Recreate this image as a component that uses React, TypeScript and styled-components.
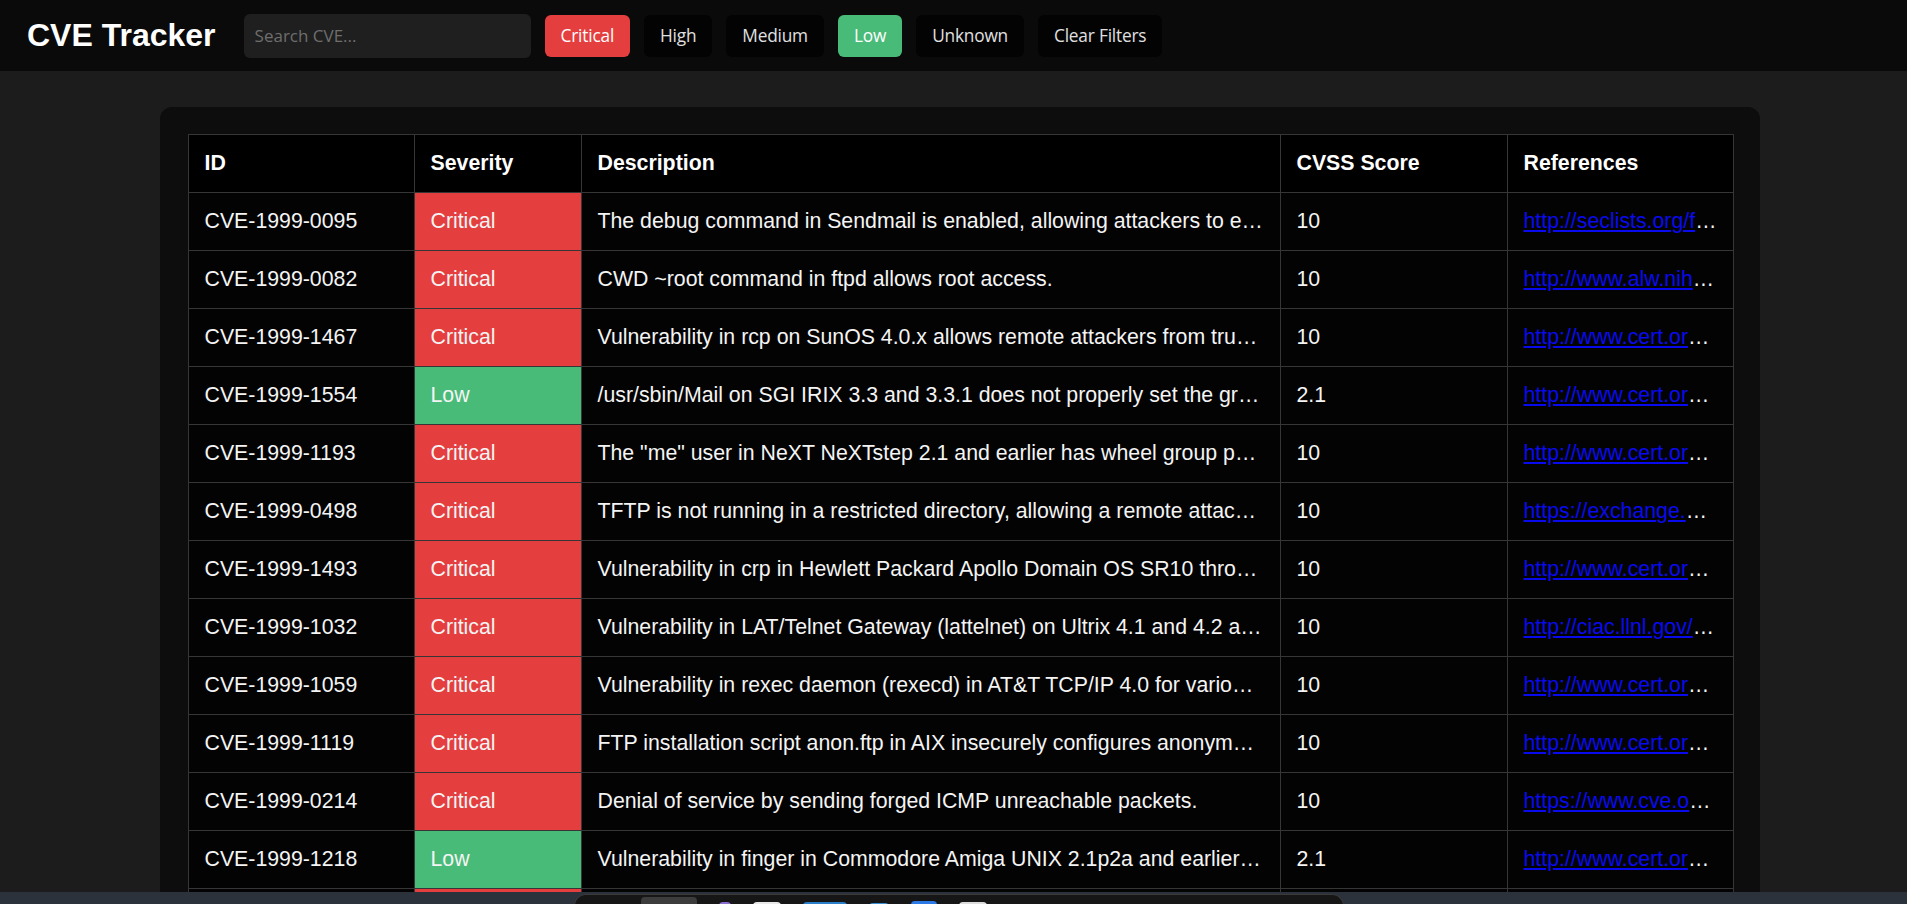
import React, { useState } from 'react'
import styled, { createGlobalStyle } from 'styled-components'

const GlobalStyle = createGlobalStyle`
  html, body {
    margin: 0;
    padding: 0;
    background: #1c1c1c;
    overflow: hidden;
    scrollbar-width: none;
  }
  body {
    font-family: "Liberation Sans", Arial, sans-serif;
    color: #f2f2f2;
  }
`

const Header = styled.header`
  display: flex;
  align-items: center;
  height: 71px;
  padding: 0 27px;
  background: #0a0a0a;
`

const Title = styled.h1`
  margin: 0 28px 0 0;
  font-size: 32px;
  font-weight: 700;
  color: #fff;
  white-space: nowrap;
`

const Search = styled.input`
  width: 287px;
  height: 44px;
  box-sizing: border-box;
  padding: 0 11px;
  border: none;
  border-radius: 6px;
  background: #1f1f1f;
  color: #ddd;
  font-family: "Open Sans", sans-serif;
  font-size: 17px;
  outline: none;
  &::placeholder {
    color: #6e6e6e;
  }
`

const FilterButton = styled.button<{ $active?: string }>`
  height: 42px;
  margin-left: 14px;
  padding: 0 16px;
  border: none;
  border-radius: 6px;
  background: ${p => p.$active || '#030303'};
  color: ${p => (p.$active ? '#fff' : '#e0e0e0')};
  font-family: "Open Sans", sans-serif;
  font-size: 17.3px;
  letter-spacing: -0.2px;
  cursor: pointer;
  white-space: nowrap;
`

const Panel = styled.main`
  width: 1600px;
  box-sizing: border-box;
  margin: 36px 0 0 160px;
  padding: 27px 27px 27px 27.5px;
  background: #0d0d0d;
  border-radius: 12px;
`

const Table = styled.table`
  width: 1545px;
  table-layout: fixed;
  border-collapse: collapse;
  background: #030303;
  font-size: 21.3px;
`

const Th = styled.th`
  padding: 16px;
  line-height: 25px;
  text-align: left;
  font-weight: 700;
  color: #fff;
  background: #000;
  border: 1px solid #363636;
`

const Td = styled.td<{ $bg?: string }>`
  padding: 16px;
  line-height: 25px;
  color: #f4f4f4;
  background: ${p => p.$bg || 'transparent'};
  border: 1px solid #363636;
  white-space: nowrap;
  overflow: hidden;
  text-overflow: ellipsis;
`

const RefLink = styled.a`
  color: #0a0aee;
  text-decoration: underline;
`

const OsBar = styled.div`
  position: fixed;
  left: 0;
  right: 0;
  bottom: 0;
  height: 12px;
  background: #2c323c;
`

const Dock = styled.div`
  position: absolute;
  left: 574px;
  top: 2px;
  width: 770px;
  height: 12px;
  display: flex;
  align-items: flex-start;
  gap: 22px;
  padding-left: 66px;
  box-sizing: border-box;
  background: #161616;
  border: 1px solid #3a3a3a;
  border-bottom: none;
  border-radius: 12px 12px 0 0;
`

const DockIcon = styled.span<{ $c: string; $w?: number; $mt?: number }>`
  display: block;
  width: ${p => p.$w || 24}px;
  height: 10px;
  margin-top: ${p => p.$mt ?? 7}px;
  border-radius: 4px 4px 0 0;
  background: ${p => p.$c};
`

const severityColors: Record<string, string> = {
  Critical: '#e53e3e',
  High: '#dd6b20',
  Medium: '#d69e2e',
  Low: '#48bb78',
  Unknown: '#718096',
}

type Cve = { id: string; severity: string; description: string; score: string; ref: string }

const cves: Cve[] = [
  { id: 'CVE-1999-0095', severity: 'Critical', description: 'The debug command in Sendmail is enabled, allowing attackers to execute commands as root.', score: '10', ref: 'http://seclists.org/fulldisclosure/2019/Jun/16' },
  { id: 'CVE-1999-0082', severity: 'Critical', description: 'CWD ~root command in ftpd allows root access.', score: '10', ref: 'http://www.alw.nih.gov/Security/Docs/admin-guide-to-cracking.101.html' },
  { id: 'CVE-1999-1467', severity: 'Critical', description: 'Vulnerability in rcp on SunOS 4.0.x allows remote attackers from trusted hosts to execute arbitrary commands as root.', score: '10', ref: 'http://www.cert.org/advisories/CA-1989-07.html' },
  { id: 'CVE-1999-1554', severity: 'Low', description: '/usr/sbin/Mail on SGI IRIX 3.3 and 3.3.1 does not properly set the group ID to the group ID of the user who started Mail.', score: '2.1', ref: 'http://www.cert.org/advisories/CA-1990-08.html' },
  { id: 'CVE-1999-1193', severity: 'Critical', description: 'The "me" user in NeXT NeXTstep 2.1 and earlier has wheel group permissions, which could allow the me user to become root.', score: '10', ref: 'http://www.cert.org/advisories/CA-1991-06.html' },
  { id: 'CVE-1999-0498', severity: 'Critical', description: 'TFTP is not running in a restricted directory, allowing a remote attacker to access sensitive information.', score: '10', ref: 'https://exchange.xforce.ibmcloud.com/vulnerabilities/CVE-1999-0498' },
  { id: 'CVE-1999-1493', severity: 'Critical', description: 'Vulnerability in crp in Hewlett Packard Apollo Domain OS SR10 through SR10.3 allows local users to gain root privileges.', score: '10', ref: 'http://www.cert.org/advisories/CA-1992-08.html' },
  { id: 'CVE-1999-1032', severity: 'Critical', description: 'Vulnerability in LAT/Telnet Gateway (lattelnet) on Ultrix 4.1 and 4.2 allows attackers to gain root privileges.', score: '10', ref: 'http://ciac.llnl.gov/ciac/bulletins/b-41.shtml' },
  { id: 'CVE-1999-1059', severity: 'Critical', description: 'Vulnerability in rexec daemon (rexecd) in AT&T TCP/IP 4.0 for various SVR4 systems allows remote attackers to execute commands.', score: '10', ref: 'http://www.cert.org/advisories/CA-1992-07.html' },
  { id: 'CVE-1999-1119', severity: 'Critical', description: 'FTP installation script anon.ftp in AIX insecurely configures anonymous FTP, which allows remote attackers to execute commands.', score: '10', ref: 'http://www.cert.org/advisories/CA-1992-09.html' },
  { id: 'CVE-1999-0214', severity: 'Critical', description: 'Denial of service by sending forged ICMP unreachable packets.', score: '10', ref: 'https://www.cve.org/CVERecord?id=CVE-1999-0214' },
  { id: 'CVE-1999-1218', severity: 'Low', description: 'Vulnerability in finger in Commodore Amiga UNIX 2.1p2a and earlier allows local users to read arbitrary files.', score: '2.1', ref: 'http://www.cert.org/advisories/CA-1993-02.html' },
  { id: 'CVE-1999-1197', severity: 'Critical', description: 'TIOCCONS in SunOS 4.1.1 does not properly check the permissions of a user who tries to redirect console output.', score: '10', ref: 'http://www.cert.org/advisories/CA-1990-12.html' },
  { id: 'CVE-1999-1391', severity: 'Critical', description: 'Vulnerability in NeXT 1.0a and 1.0 with publicly accessible printers allows local users to gain privileges.', score: '10', ref: 'http://www.cert.org/advisories/CA-1990-06.html' },
]

const filters = ['Critical', 'High', 'Medium', 'Low', 'Unknown']

export default function App() {
  const [active, setActive] = useState<string[]>(['Critical', 'Low'])
  const [query, setQuery] = useState('')

  const toggle = (f: string) =>
    setActive(a => (a.includes(f) ? a.filter(x => x !== f) : [...a, f]))

  const rows = cves.filter(
    c =>
      (active.length === 0 || active.includes(c.severity)) &&
      c.id.toLowerCase().includes(query.toLowerCase())
  )

  return (
    <>
      <GlobalStyle />
      <Header>
        <Title>CVE Tracker</Title>
        <Search placeholder="Search CVE..." value={query} onChange={e => setQuery(e.target.value)} />
        {filters.map(f => (
          <FilterButton
            key={f}
            $active={active.includes(f) ? severityColors[f] : undefined}
            onClick={() => toggle(f)}
          >
            {f}
          </FilterButton>
        ))}
        <FilterButton onClick={() => setActive([])}>Clear Filters</FilterButton>
      </Header>
      <Panel>
        <Table>
          <colgroup>
            <col style={{ width: 226 }} />
            <col style={{ width: 167 }} />
            <col style={{ width: 699 }} />
            <col style={{ width: 227 }} />
            <col style={{ width: 226 }} />
          </colgroup>
          <thead>
            <tr>
              <Th>ID</Th>
              <Th>Severity</Th>
              <Th>Description</Th>
              <Th>CVSS Score</Th>
              <Th>References</Th>
            </tr>
          </thead>
          <tbody>
            {rows.map(c => (
              <tr key={c.id}>
                <Td>{c.id}</Td>
                <Td $bg={severityColors[c.severity]}>{c.severity}</Td>
                <Td>{c.description}</Td>
                <Td>{c.score}</Td>
                <Td>
                  <RefLink href={c.ref}>{c.ref}</RefLink>
                </Td>
              </tr>
            ))}
          </tbody>
        </Table>
      </Panel>
      <OsBar>
        <Dock>
          <DockIcon $c="#3c3c3c" $w={56} $mt={2} />
          <DockIcon $c="#8a6fd1" $w={12} />
          <DockIcon $c="#e8e8e8" $w={28} />
          <DockIcon $c="#2a7fc8" $w={44} />
          <DockIcon $c="#3b8fd8" $w={20} $mt={8} />
          <DockIcon $c="#2c78e4" $w={26} $mt={6} />
          <DockIcon $c="#dcdcdc" $w={28} />
        </Dock>
      </OsBar>
    </>
  )
}
